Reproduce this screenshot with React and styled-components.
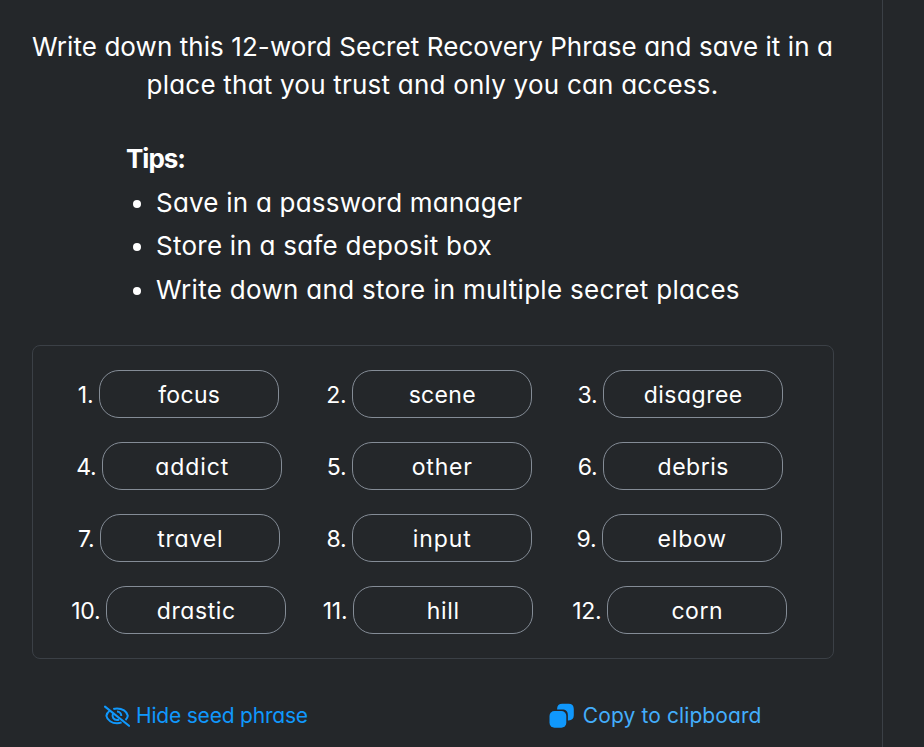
import React from 'react';
import styled, { createGlobalStyle } from 'styled-components';

const GlobalStyle = createGlobalStyle`
  * { box-sizing: border-box; }
  body {
    margin: 0;
    background: #24272a;
    color: #fff;
    font-family: Inter, 'Liberation Sans', sans-serif;
    font-feature-settings: 'cv11';
  }
`;

const Page = styled.div`
  display: flex;
  width: 100%;
  height: 747px;
  overflow: hidden;
`;

const Panel = styled.main`
  display: flex;
  flex-direction: column;
  width: 883px;
  padding: 28px 49px 0 32px;
  border-right: 1px solid #3b4046;
`;

const Text = styled.span`
  letter-spacing: ${(p) => p.$spacing || 0}px;
`;

const Intro = styled.p`
  display: flex;
  flex-direction: column;
  align-items: center;
  margin: 0;
  font-size: 26px;
  line-height: 38px;
  white-space: nowrap;
`;

const Tips = styled.section`
  margin: 36px 0 0 94px;
  font-size: 26px;
`;

const TipsTitle = styled.h2`
  margin: 0 0 3px;
  font-size: 26px;
  font-weight: 700;
  line-height: 38px;
  letter-spacing: -1px;
`;

const TipList = styled.ul`
  margin: 0;
  padding: 0;
  list-style: none;
`;

const Tip = styled.li`
  display: flex;
  align-items: center;
  gap: 15px;
  padding-left: 7px;
  line-height: 43.4px;
  white-space: nowrap;

  &::before {
    content: '';
    width: 8px;
    height: 8px;
    margin-top: 2px;
    border-radius: 50%;
    background: #fff;
  }
`;

const PhraseBox = styled.section`
  display: grid;
  grid-template-columns: repeat(3, 250.5px);
  grid-auto-rows: 48px;
  row-gap: 24px;
  width: 802px;
  height: 314px;
  margin-top: 33.8px;
  padding: 24px 0 24px 21px;
  border: 1px solid #3b4046;
  border-radius: 8px;
`;

const WordItem = styled.div`
  display: flex;
  align-items: center;
  justify-content: center;
  font-size: 23px;
  line-height: 48px;
`;

const WordNumber = styled.span`
  display: flex;
  justify-content: flex-end;
  width: ${(p) => p.$width}px;
  padding-right: 6px;
  padding-top: 2px;
  letter-spacing: -0.3px;
  white-space: nowrap;
`;

const Chip = styled.div`
  width: 180px;
  height: 48px;
  flex: none;
  border: 1px solid #848c96;
  border-radius: 20px;
  text-align: center;
`;

const Actions = styled.div`
  display: flex;
  margin-top: 41px;
  padding-left: 72px;
  gap: 241px;
`;

const Action = styled.button`
  display: flex;
  align-items: center;
  height: 32px;
  padding: 0;
  border: 0;
  background: none;
  color: ${(p) => p.$color};
  font: inherit;
  font-size: 21px;
  line-height: 32px;
  white-space: nowrap;
`;

const Icon = styled.svg`
  flex: none;
  width: 26px;
  height: 26px;
  margin-right: ${(p) => p.$gap}px;
  color: #1098fc;
`;

const TIPS = [
  { text: 'Save in a password manager', spacing: 0.22 },
  { text: 'Store in a safe deposit box', spacing: 0.25 },
  { text: 'Write down and store in multiple secret places', spacing: 0.3 },
];

const WORDS = [
  { word: 'focus', width: 20, spacing: 0.3 },
  { word: 'scene', width: 25, spacing: 0.3 },
  { word: 'disagree', width: 26, spacing: 0.5 },
  { word: 'addict', width: 26, spacing: 0.9 },
  { word: 'other', width: 25, spacing: 0.8 },
  { word: 'debris', width: 26, spacing: 0.5 },
  { word: 'travel', width: 22, spacing: 0.8 },
  { word: 'input', width: 25, spacing: 0.9 },
  { word: 'elbow', width: 24, spacing: 0.8 },
  { word: 'drastic', width: 34, spacing: 0.6 },
  { word: 'hill', width: 27, spacing: 0.7 },
  { word: 'corn', width: 34, spacing: 0.5 },
];

function EyeSlashIcon() {
  return (
    <Icon viewBox="0 0 26 26" $gap={6} fill="none" stroke="currentColor" strokeWidth="2">
      <path d="M6 7.5C4.2 8.8 2.6 10.6 2.4 12.8C3.2 17.4 8 20.3 13 20.3C14.7 20.3 16.2 20 17.6 19.4M9.3 6C10.5 5.6 11.7 5.4 13 5.4C18.2 5.4 23 8.3 23.8 12.8C23.6 14.4 22.7 15.8 21.5 16.9" />
      <path d="M8.9 10.8C7.6 14 9.8 17 13 17C13.8 17 14.5 16.8 15.1 16.5M13 8.6C15.7 8.6 17.4 10.6 17.3 13" />
      <path d="M1 3.6L25 22.8" strokeWidth="2.1" strokeLinecap="round" />
    </Icon>
  );
}

function CopyIcon() {
  return (
    <Icon viewBox="0 0 26 26" $gap={8} fill="currentColor">
      <rect x="0.5" y="8" width="16.8" height="16.8" rx="5" />
      <path d="M8.1 6.4V6C8.1 2.6 9.9 0.8 13.3 0.8H19.6C23 0.8 24.8 2.6 24.8 6V12.2C24.8 15.6 23 17.4 19.6 17.4H18.9V12.4C18.9 8.2 17.1 6.4 12.9 6.4Z" />
    </Icon>
  );
}

export default function App() {
  return (
    <>
      <GlobalStyle />
      <Page>
        <Panel>
          <Intro>
            <Text $spacing={0.07}>Write down this 12-word Secret Recovery Phrase and save it in a</Text>
            <Text $spacing={0.22}>place that you trust and only you can access.</Text>
          </Intro>
          <Tips>
            <TipsTitle>Tips:</TipsTitle>
            <TipList>
              {TIPS.map((tip) => (
                <Tip key={tip.text}>
                  <Text $spacing={tip.spacing}>{tip.text}</Text>
                </Tip>
              ))}
            </TipList>
          </Tips>
          <PhraseBox>
            {WORDS.map((item, index) => (
              <WordItem key={item.word}>
                <WordNumber $width={item.width}>{index + 1}.</WordNumber>
                <Chip>
                  <Text $spacing={item.spacing}>{item.word}</Text>
                </Chip>
              </WordItem>
            ))}
          </PhraseBox>
          <Actions>
            <Action $color="#1098fc">
              <EyeSlashIcon />
              <Text $spacing={-0.2}>Hide seed phrase</Text>
            </Action>
            <Action $color="#43aefc">
              <CopyIcon />
              <Text $spacing={0.1}>Copy to clipboard</Text>
            </Action>
          </Actions>
        </Panel>
      </Page>
    </>
  );
}
